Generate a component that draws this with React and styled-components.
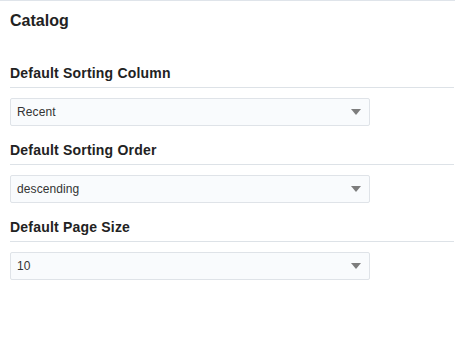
import React from 'react';
import styled, { createGlobalStyle } from 'styled-components';

const GlobalStyle = createGlobalStyle`
  body {
    margin: 0;
    background: #fff;
    font-family: "Liberation Sans", Arial, sans-serif;
  }
`;

const Page = styled.div`
  width: 455px;
  height: 350px;
  box-sizing: border-box;
  border-top: 1px solid #dfe4ea;
  padding: 0 1px 0 10px;
`;

const Title = styled.h2`
  margin: 0;
  padding-top: 10px;
  font-size: 16px;
  line-height: 20px;
  font-weight: 700;
  color: #222;
`;

const Section = styled.div`
  margin-top: ${(p) => p.$first ? '33px' : '15px'};
`;

const Label = styled.h3`
  margin: 0;
  padding-bottom: 5px;
  border-bottom: 1px solid #dde2e7;
  font-size: 14px;
  line-height: 18px;
  font-weight: 700;
  letter-spacing: 0.2px;
  color: #222;
`;

const Select = styled.div`
  margin-top: 10px;
  width: 360px;
  height: 28px;
  box-sizing: border-box;
  display: flex;
  align-items: center;
  justify-content: space-between;
  padding: 0 8px 0 6px;
  background: #f9fbfd;
  border: 1px solid #dfe3e8;
  border-radius: 2px;
  font-size: 12px;
  letter-spacing: 0.1px;
  color: #333;
  cursor: pointer;
`;

const Caret = styled.span`
  width: 0;
  height: 0;
  border-left: 5px solid transparent;
  border-right: 5px solid transparent;
  border-top: 6px solid #7d7d7d;
`;

const fields = [
  { label: 'Default Sorting Column', value: 'Recent' },
  { label: 'Default Sorting Order', value: 'descending' },
  { label: 'Default Page Size', value: '10' },
];

export default function App() {
  return (
    <>
      <GlobalStyle />
      <Page>
        <Title>Catalog</Title>
        {fields.map((f, i) => (
          <Section key={f.label} $first={i === 0}>
            <Label>{f.label}</Label>
            <Select>
              <span>{f.value}</span>
              <Caret />
            </Select>
          </Section>
        ))}
      </Page>
    </>
  );
}
